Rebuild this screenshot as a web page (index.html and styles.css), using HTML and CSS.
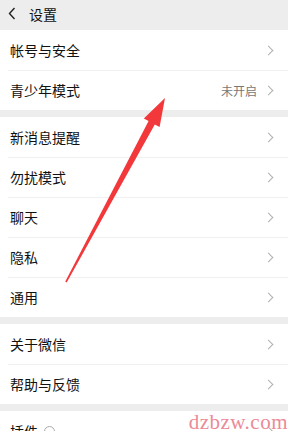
FILE: index.html
```
<!DOCTYPE html>
<html lang="zh">
<head>
<meta charset="utf-8">
<link rel="stylesheet" href="styles.css">
</head>
<body>
<div class="page">
  <div class="header">
    <svg class="back" width="8" height="13" viewBox="0 0 8 13"><path d="M6.5 1 L1.5 6.5 L6.5 12" fill="none" stroke="#222" stroke-width="1.4"/></svg>
    <span class="title">设置</span>
  </div>
  <div class="group">
    <div class="row"><span class="label">帐号与安全</span><span class="chev"></span></div>
    <div class="row"><span class="label">青少年模式</span><span class="value">未开启</span><span class="chev"></span></div>
  </div>
  <div class="group">
    <div class="row"><span class="label">新消息提醒</span><span class="chev"></span></div>
    <div class="row"><span class="label">勿扰模式</span><span class="chev"></span></div>
    <div class="row"><span class="label">聊天</span><span class="chev"></span></div>
    <div class="row"><span class="label">隐私</span><span class="chev"></span></div>
    <div class="row"><span class="label">通用</span><span class="chev"></span></div>
  </div>
  <div class="group">
    <div class="row"><span class="label">关于微信</span><span class="chev"></span></div>
    <div class="row"><span class="label">帮助与反馈</span><span class="chev"></span></div>
  </div>
  <div class="group">
    <div class="row"><span class="label short">插件</span><span class="plug"></span><span class="chev"></span></div>
  </div>
  <svg class="arrow" width="288" height="431" viewBox="0 0 288 431">
    <polygon points="165,98 159.6,127 154.8,124.4 66.7,282.4 65.3,281.6 148.6,121 143.8,118.4" fill="#f2383a"/>
  </svg>
  <div class="mark">dzbzw.com</div>
</div>
</body>
</html>
```
FILE: styles.css
```
html, body {
  margin: 0;
  padding: 0;
}
body {
  background: #ededed;
  font-family: "Noto Sans CJK SC", "Noto Sans", sans-serif;
  color: #111;
  width: 288px;
  height: 431px;
  overflow: hidden;
}
.page {
  position: relative;
  height: 431px;
  overflow: hidden;
}
.header {
  height: 30px;
  box-sizing: border-box;
  padding: 0 0 3px 8px;
  display: flex;
  align-items: center;
  background: #ededed;
}
.back {
  display: block;
  margin-right: 13px;
}
.title {
  font-size: 14px;
}
.group {
  background: #fff;
  margin-bottom: 7px;
}
.row {
  height: 40px;
  display: flex;
  align-items: center;
  padding: 0 16px 0 10px;
  position: relative;
}
.row + .row::before {
  content: "";
  position: absolute;
  left: 8px;
  right: 0;
  top: 0;
  height: 1px;
  background: #f0f0f0;
}
.label {
  font-size: 14px;
  flex: 1;
}
.label.short {
  flex: none;
}
.value {
  font-size: 12px;
  color: #777;
  margin-right: 8px;
}
.chev {
  width: 6px;
  height: 6px;
  border-top: 1.2px solid #b0b0b0;
  border-right: 1.2px solid #b0b0b0;
  transform: rotate(45deg);
}
.plug {
  width: 9px;
  height: 9px;
  border: 1px solid #aaa;
  border-radius: 50%;
  margin-right: auto;
  margin-left: 6px;
}
.arrow {
  position: absolute;
  left: 0;
  top: 0;
  pointer-events: none;
}
.mark {
  position: absolute;
  right: 0;
  top: 410px;
  font-family: "Liberation Serif", serif;
  font-size: 21px;
  line-height: 24px;
  letter-spacing: 0.5px;
  color: #ec8a97;
}
```
